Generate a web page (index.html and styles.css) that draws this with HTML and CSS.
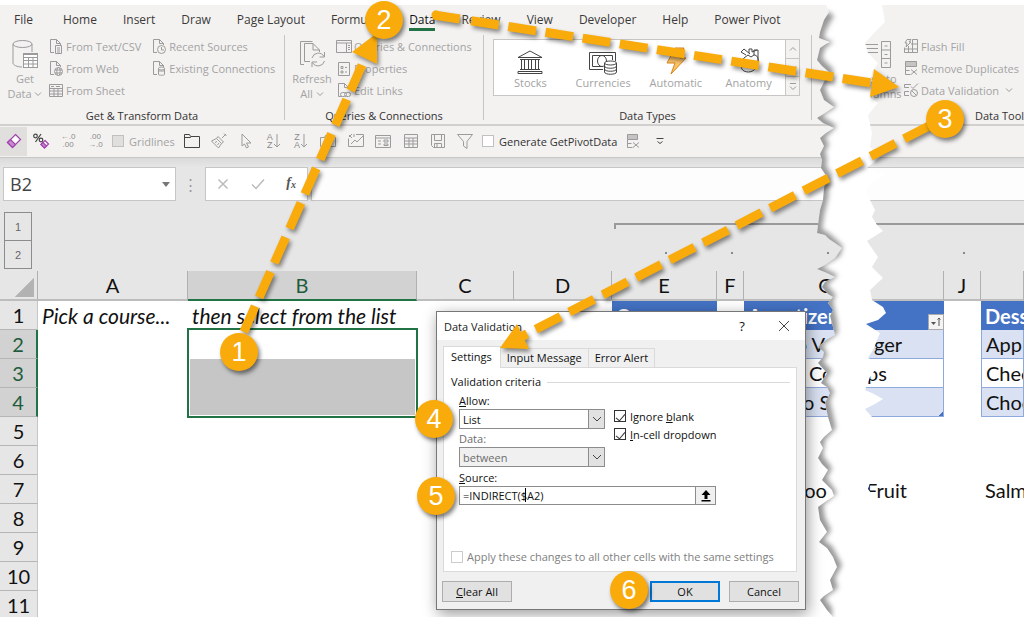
FILE: index.html
```html
<!DOCTYPE html>
<html lang="en">
<head>
<meta charset="utf-8">
<title>Dependent drop-down list – Data Validation</title>
<link rel="stylesheet" href="styles.css">
</head>
<body>
<svg class="defs" width="0" height="0" aria-hidden="true">
  <symbol id="chev" viewBox="0 0 8 8"><path d="M1 2.5 4 5.5 7 2.5"/></symbol>
  <symbol id="page" viewBox="0 0 16 16"><path d="M6 14.5H2.500V1.500H8.500L12.500 5.500V7M8.500 1.500V5.500H12.500"/></symbol>
</svg>
<div class="app">
  <header class="ribbon">
    <nav class="tabs">
      <a href="#file" class="tab file">File</a><a href="#home" class="tab">Home</a><a href="#insert" class="tab">Insert</a><a href="#draw" class="tab">Draw</a><a href="#layout" class="tab">Page Layout</a><a href="#formulas" class="tab">Formulas</a><a href="#data" class="tab active">Data</a><a href="#review" class="tab">Review</a><a href="#view" class="tab">View</a><a href="#developer" class="tab">Developer</a><a href="#help" class="tab">Help</a><a href="#pivot" class="tab">Power Pivot</a>
    </nav>
    <div class="groups">
      <section class="group get">
        <div class="tools">
          <button class="big">
            <svg class="ic" width="28" height="32" viewBox="0 0 28 32"><path d="M2 5v19c0 2 4 4 9 4M21 5v8"/><ellipse cx="11.500" cy="5" rx="9.500" ry="3.500"/><rect x="12.500" y="14.500" width="14" height="14" fill="#fff"/><path d="M12.500 15.500h14v3h-14zM17.500 18v10M22 18v10M12.500 21.500h14M12.500 25h14"/></svg>
            <span>Get</span><span>Data <svg class="ic" width="8" height="8"><use href="#chev"/></svg></span>
          </button>
          <div class="stack">
            <button class="small"><svg class="ic" width="16" height="16" viewBox="0 0 16 16"><use href="#page"/><path d="M7.500 7.500h6v8h-6zM9 10h3M9 12h3M9 14h3"/></svg>From Text/CSV</button>
            <button class="small"><svg class="ic" width="16" height="16" viewBox="0 0 16 16"><use href="#page"/><circle cx="10.500" cy="11.500" r="4"/><ellipse cx="10.500" cy="11.500" rx="1.700" ry="4"/><path d="M7 10h7M7 13h7"/></svg>From Web</button>
            <button class="small"><svg class="ic" width="16" height="16" viewBox="0 0 16 16"><path d="M1.500 2.500h13v12h-13zM1.500 6.500h13M1.500 9h13M1.500 12h13M6 6.500v8M10 6.500v8M3 4.500h3M8 4.500h4"/></svg>From Sheet</button>
          </div>
          <div class="stack second">
            <button class="small"><svg class="ic" width="16" height="16" viewBox="0 0 16 16"><use href="#page"/><circle cx="10.500" cy="11.500" r="4"/><path d="M10.500 9v3h2.500"/></svg>Recent Sources</button>
            <button class="small"><svg class="ic" width="16" height="16" viewBox="0 0 16 16"><use href="#page"/><ellipse cx="10.500" cy="8.500" rx="3" ry="1.500"/><path d="M7.500 8.500v6c0 1 6 1 6 0v-6M7.500 11h6"/></svg>Existing Connections</button>
          </div>
        </div>
        <h2>Get &amp; Transform Data</h2>
      </section>
      <section class="group conn">
        <div class="tools">
          <button class="big">
            <svg class="ic" width="28" height="32" viewBox="0 0 28 32"><path d="M6 25.500H2.500V2.500h12M12 22.500H6.500V4.500H15l6.500 6.500v2M15 4.500V11h6.500"/><path d="M14 19a6.500 6.500 0 0 1 12-1.500M26.500 13v5h-5M26.500 22a6.500 6.500 0 0 1-12 1.500M14 28v-5h5"/></svg>
            <span>Refresh</span><span>All <svg class="ic" width="8" height="8"><use href="#chev"/></svg></span>
          </button>
          <div class="stack">
            <button class="small"><svg class="ic" width="16" height="16" viewBox="0 0 16 16"><path d="M.5 1.500h15v12H.5zM.5 4h15M10.500 4v9.500M12 6.500h2M12 8.500h2M12 10.500h2"/></svg>Queries &amp; Connections</button>
            <button class="small"><svg class="ic" width="16" height="16" viewBox="0 0 16 16"><path d="M2.500 1.500h11v13h-11zM5 5.500h2v2H5zM5 10h2v2H5zM9 6.500h2M9 11h2"/></svg>Properties</button>
            <button class="small"><svg class="ic" width="16" height="16" viewBox="0 0 16 16"><use href="#page"/><rect x="4.500" y="10.500" width="6" height="4" rx="2"/><rect x="8.500" y="10.500" width="6" height="4" rx="2"/></svg>Edit Links</button>
          </div>
        </div>
        <h2>Queries &amp; Connections</h2>
      </section>
      <section class="group types">
        <div class="gallery">
          <button class="type"><svg class="dark" width="28" height="26" viewBox="0 0 28 26"><path d="M2 8.500 14 2l12 6.500zM4 10.500h20M2 22.500h24v2H2zM4 20.500h20M5.500 10.500v10M8.500 10.500v10M12.500 10.500v10M15.500 10.500v10M19.500 10.500v10M22.500 10.500v10"/></svg>Stocks</button>
          <button class="type"><svg class="dark" width="28" height="26" viewBox="0 0 28 26"><path d="M14 20.500H.5v-17h26V12M3.500 17.500v-11h20V11M3.500 17.500H14"/><ellipse cx="13" cy="12" rx="4.500" ry="5.500"/><path d="M15.500 14v9c0 3 12 3 12 0v-9" fill="#fff"/><ellipse cx="21.500" cy="14" rx="6" ry="2" fill="#fff"/><path d="M15.500 17c0 3 12 3 12 0M15.500 20c0 3 12 3 12 0"/></svg>Currencies</button>
          <button class="type"><svg class="bolt" width="28" height="28" viewBox="0 0 28 28"><path d="M13 1h9l-4 10h6L9 27l4-11H5z"/></svg>Automatic</button>
          <button class="type"><svg class="dark" width="28" height="28" viewBox="0 0 28 28"><path d="M9 11c-4 4-4 11 0 13 6 3 13-1 14-8 1-5-1-8-4-8l-3 2-3-2-4 3M11 8 6 5l3-3 6 5M14 6V2h3v3M19 8V3h4v12M17 5l5-2M10 14c5-1 8 3 8 8"/></svg>Anatomy</button>
          <div class="scroller">
            <button aria-label="Previous row"><svg class="ic up" width="8" height="8"><use href="#chev"/></svg></button>
            <button aria-label="Next row"><svg class="ic" width="8" height="8"><use href="#chev"/></svg></button>
            <button aria-label="More data types"><svg class="ic" width="8" height="9" viewBox="0 0 8 9"><path d="M1 1.500h6M1 4.500l3 3 3-3"/></svg></button>
          </div>
        </div>
        <h2>Data Types</h2>
      </section>
      <section class="group datatools">
        <div class="tools">
          <button class="big">
            <svg class="ic" width="32" height="32" viewBox="0 0 32 32"><path d="M1 5.500h14M3 9.500h12M1 13.500h14M18.500 2.500h9v26h-9zM18.500 11h9M18.500 19.500h9M21.500 7h3M21.500 15.500h3M21.500 24h3"/></svg>
            <span>Text to</span><span>Columns</span>
          </button>
          <div class="stack">
            <button class="small"><svg class="ic" width="16" height="16" viewBox="0 0 16 16"><path d="M4 1.500h4L6 4h2L3 9l1-4H2zM9.500 1.500h5v13h-13v-5M9.500 1.500v13M5.500 8v6.500M1.500 11h13M8 6h6.500"/></svg>Flash Fill</button>
            <button class="small"><svg class="ic" width="16" height="16" viewBox="0 0 16 16"><path d="M2.500 1.500h11v5h-11z" fill="#c4c4c4"/><path d="M2.500 6.500v8h5M2.500 10.500h4M8 9.500l6 5M14 9.500l-6 5"/></svg>Remove Duplicates</button>
            <button class="small"><svg class="ic" width="16" height="16" viewBox="0 0 16 16"><path d="M8 2.500H1.500v3H6M6 9.500H1.500v4H6M8 4.500l2 2 5-5"/><circle cx="11" cy="11" r="3.500"/><path d="m8.500 8.500 5 5"/></svg>Data Validation<svg class="ic after" width="8" height="8"><use href="#chev"/></svg></button>
          </div>
        </div>
        <h2>Data Tools</h2>
      </section>
    </div>
    <div class="quick">
      <div class="set first">
        <button class="on" aria-label="Clear"><svg class="pink" width="16" height="16" viewBox="0 0 16 16"><path d="M9.500 1.500 14.500 6.500 6.500 14.500 1.500 9.500z" fill="#fff"/><path d="m1.500 9.500 3-3 5 5-3 3z" fill="#c78bd0"/></svg></button>
        <button aria-label="Clear format"><svg class="pink" width="18" height="18" viewBox="0 0 18 18"><g stroke="#444"><circle cx="3.500" cy="4" r="1.800"/><circle cx="9" cy="8" r="1.800"/><path d="M9 2 3.500 10"/></g><path d="m13 8.500 3.500 3.500-4 4-3.500-3.500z" fill="#fff"/><path d="m9 12.500 2-2 3.500 3.500-2 2z" fill="#c78bd0"/></svg></button>
        <button class="dec" aria-label="Increase decimal"><span>←.0</span><span>.00</span></button>
        <button class="dec" aria-label="Decrease decimal"><span>.00</span><span>→.0</span></button>
      </div>
      <label class="tick dim"><input type="checkbox" disabled>Gridlines</label>
      <div class="set second">
        <button aria-label="Open"><svg class="dark" width="18" height="18" viewBox="0 0 18 18"><path d="M1.500 15.500v-13h5l1 2h9v11zM1.500 5.500h6l1-1"/></svg></button>
        <button aria-label="Format painter"><svg class="ic" width="18" height="18" viewBox="0 0 18 18"><path d="m16 2-4 4M14 1.500l2.500 2.500M8 4.500l5.500 5.500-2 1.500L6.500 6.500zM6.500 6.500 1.500 9l7 7 3-4.500M5 10.500l2-1M7.500 13l1.500-2"/></svg></button>
        <button aria-label="Select objects"><svg class="ic" width="18" height="18" viewBox="0 0 18 18"><path d="m5 2 9 9H9.500l2 4-2 1-2-4L5 14z"/></svg></button>
        <button class="sort" aria-label="Sort ascending"><span>A<br>Z</span><svg class="ic" width="8" height="16" viewBox="0 0 8 16"><path d="M4 1v13M1 11l3 3 3-3"/></svg></button>
        <button class="sort" aria-label="Sort descending"><span>Z<br>A</span><svg class="ic" width="8" height="16" viewBox="0 0 8 16"><path d="M4 1v13M1 11l3 3 3-3"/></svg></button>
        <button aria-label="Camera"><svg class="ic" width="18" height="18" viewBox="0 0 18 18"><path d="M1.500 5.500h4l1-2h5l1 2h4v9h-15z"/><circle cx="9" cy="9.500" r="3"/></svg></button>
        <button aria-label="Chart"><svg class="ic" width="18" height="18" viewBox="0 0 18 18"><path d="M1.500 6.500v8h15v-12H9M4 12l4-4 2 2 6-6M2 3l3 3M5 2 2 5M7 2v3"/></svg></button>
        <button aria-label="Form"><svg class="ic" width="18" height="18" viewBox="0 0 18 18"><path d="M1.500 3.500h15v12h-15zM1.500 6h15M4 9h3M4 12h3M10 8h4v2h-4zM10 12h4v1.500h-4z"/></svg></button>
        <button aria-label="Table"><svg class="ic" width="18" height="18" viewBox="0 0 18 18"><path d="M2.500 2.500h13v13h-13zM2.500 6h13M2.500 9h13M2.500 12h13M7 6v9.500M11 6v9.500"/></svg></button>
        <button aria-label="Save"><svg class="ic" width="18" height="18" viewBox="0 0 18 18"><path d="M2.500 2.500h13v13h-11l-2-2zM5.500 2.500v6h7v-6M5.500 15.500v-4h7v4M8 12v3"/></svg></button>
        <button aria-label="Filter"><svg class="ic" width="18" height="18" viewBox="0 0 18 18"><path d="M1.500 2.500h15L11 9.500v7L7.500 14V9.500z"/></svg></button>
      </div>
      <label class="tick"><input type="checkbox">Generate GetPivotData</label>
      <button class="solo" aria-label="Remove duplicates"><svg class="ic" width="16" height="16" viewBox="0 0 16 16"><path d="M2.500 1.500h10v5h-10z" fill="#c4c4c4"/><path d="M2.500 6.500v8h5M2.500 10.500h4M8 9.500l6 5M14 9.500l-6 5"/></svg></button>
      <button class="solo" aria-label="Customize toolbar"><svg class="dark" width="8" height="8" viewBox="0 0 8 8"><path d="M.5 1.500h7M1.500 4.500l2.500 2 2.500-2"/></svg></button>
    </div>
  </header>

  <div class="formula">
    <div class="namebox"><input aria-label="Name box" value="B2"><i class="tri"></i></div>
    <span class="grip">⋮</span>
    <div class="fx">
      <svg width="12" height="12" viewBox="0 0 12 12"><path d="m1.500 1.500 9 9M10.500 1.500l-9 9"/></svg>
      <svg width="14" height="12" viewBox="0 0 14 12"><path d="m1 6.500 4 4 8-9"/></svg>
      <span class="fn">f<sub>x</sub></span>
    </div>
    <input class="bar" aria-label="Formula bar">
  </div>

  <div class="outline">
    <div class="levels"><button>1</button><button>2</button></div>
    <div class="bracket"><i></i><i></i><i></i><i></i></div>
  </div>

  <table class="sheet">
    <colgroup><col class="rh"><col class="a"><col class="b"><col class="c"><col class="d"><col class="e"><col class="f"><col class="g"><col class="j"><col></colgroup>
    <thead>
      <tr><th class="corner"></th><th>A</th><th class="sel">B</th><th>C</th><th>D</th><th>E</th><th>F</th><th class="gh">G</th><th>J</th><th></th></tr>
    </thead>
    <tbody>
      <tr><th>1</th><td class="it">Pick a course...</td><td class="it">then select from the list</td><td></td><td></td><td class="hd">Course</td><td></td><td class="hd"><div class="split"><span>Appetizers</span><button class="filter" aria-label="Filter"><svg width="12" height="12" viewBox="0 0 12 12"><path d="M1 6h5L3.500 9z" fill="#555"/><path d="M9 10V2M7.500 3.500 9 2l1.500 1.500" fill="none" stroke="#555"/></svg></button></div></td><td></td><td class="hd">Dessert</td></tr>
      <tr><th class="sel">2</th><td></td><td class="pick"><span class="range"></span></td><td></td><td></td><td></td><td></td><td class="band"><div class="split"><span>Potato V</span><span>rger</span></div></td><td></td><td class="band">Apple Pie</td></tr>
      <tr><th class="sel">3</th><td></td><td class="shade"></td><td></td><td></td><td></td><td></td><td class="plain"><div class="split"><span>Crispy Co</span><span>ps</span></div></td><td></td><td class="plain">Cheesecake</td></tr>
      <tr><th class="sel">4</th><td></td><td class="shade"></td><td></td><td></td><td></td><td></td><td class="band last">Tomato S</td><td></td><td class="band">Chocolate</td></tr>
      <tr><th>5</th><td></td><td></td><td></td><td></td><td></td><td></td><td></td><td></td><td></td></tr>
      <tr><th>6</th><td></td><td></td><td></td><td></td><td></td><td></td><td></td><td></td><td></td></tr>
      <tr><th>7</th><td></td><td></td><td></td><td></td><td></td><td></td><td><div class="split"><span>Mushroo</span><span>Fruit</span></div></td><td></td><td>Salmon</td></tr>
      <tr><th>8</th><td></td><td></td><td></td><td></td><td></td><td></td><td></td><td></td><td></td></tr>
      <tr><th>9</th><td></td><td></td><td></td><td></td><td></td><td></td><td></td><td></td><td></td></tr>
      <tr><th>10</th><td></td><td></td><td></td><td></td><td></td><td></td><td></td><td></td><td></td></tr>
      <tr><th>11</th><td></td><td></td><td></td><td></td><td></td><td></td><td></td><td></td><td></td></tr>
    </tbody>
  </table>

  <svg class="overlay" width="1024" height="617" viewBox="0 0 1024 617" aria-hidden="true">
    <defs>
      <path id="tear" d="M826 0V5L829 12 824 20 820 32 819 38 830 42 826 44 820 48 817 60 822 66 829 72 825 80 820 90 824 100 834 107 825 113 817 118 823 123 834 128 826 133 820 138 824 146 820 154 822 160 821 168 827 177 824 188 823 200 820 210 819 217 817 233 825 235 829 239 835 243 842 248 835 258 825 265 817 269 827 273 835 277 825 282 822 287 828 294 833 297 828 303 833 310 830 316 832 323 835 335 826 340 818 347 824 352 823 357 818 363 827 373 821 383 827 387 830 393 825 403 828 417 832 430 824 437 820 442 823 448 818 458 822 464 828 470 822 480 832 490 834 496 825 502 818 507 820 520 827 532 819 542 827 548 833 557 837 567 830 580 833 590 824 596 820 600 827 610 833 617H884L883 600 877 585 883 557 863 532 875 523 886 513 868 489 872 477 876 460 873 447 880 437 868 427 872 417 865 409 875 404 883 399 874 394 865 390 870 377 880 363 868 358 873 350 880 333 866 324 878 320 886 313 883 307 872 300 870 290 883 278 872 267 878 257 867 241 883 231 877 225 872 217 875 210 865 190 877 180 885 175 867 168 880 157 870 147 872 133 868 115 878 103 870 97 872 72 878 63 868 53 865 43 877 30 885 22 882 5V0z"/>
      <clipPath id="strip"><use href="#tear"/></clipPath>
      <filter id="soft" x="-20%" y="-5%" width="140%" height="110%"><feGaussianBlur stdDeviation="2.500"/></filter>
    </defs>
    <use href="#tear" fill="#fff"/>
    <g clip-path="url(#strip)"><path filter="url(#soft)" transform="translate(5 -4)" fill="#999" d="M790 16H824L829 20 824 28 820 36 819 42 828 46 820 52 817 62 829 74 825 82 820 92 824 102 832 110 817 120 832 130 820 142 824 148 820 156 822 162 821 170 827 179 824 190 823 202 819 219 817 233 825 238 838 250 835 260 817 271 833 279 822 289 831 299 828 305 832 325 833 337 818 349 823 359 818 365 827 375 821 385 829 395 825 405 831 432 820 444 818 460 827 472 822 482 832 497 818 509 820 522 826 534 819 544 827 550 837 569 830 582 833 592 820 602 827 612V622H790z"/></g>
  </svg>

  <section class="dialog" role="dialog" aria-labelledby="dlg">
    <div class="title"><h1 id="dlg">Data Validation</h1><button aria-label="Help">?</button><button aria-label="Close"><svg width="12" height="12" viewBox="0 0 12 12"><path d="m1 1 10 10M11 1 1 11"/></svg></button></div>
    <div class="dtabs"><button class="active">Settings</button><button>Input Message</button><button>Error Alert</button></div>
    <div class="panel">
      <h2>Validation criteria</h2>
      <div class="fields">
        <div class="left">
          <label for="allow"><u>A</u>llow:</label>
          <div class="combo"><select id="allow"><option>List</option></select><i><svg width="10" height="8" viewBox="0 0 10 8"><path d="m1 2 4 4 4-4"/></svg></i></div>
          <label for="data" class="off">Data:</label>
          <div class="combo off"><select id="data" disabled><option>between</option></select><i><svg width="10" height="8" viewBox="0 0 10 8"><path d="m1 2 4 4 4-4"/></svg></i></div>
        </div>
        <div class="checks">
          <label><input type="checkbox" checked><span>Ignore <u>b</u>lank</span></label>
          <label><input type="checkbox" checked><span><u>I</u>n-cell dropdown</span></label>
        </div>
      </div>
      <div class="source">
        <label for="src"><u>S</u>ource:</label>
        <div class="srcrow"><input id="src" value="=INDIRECT($A2)"><span class="caret"></span><button aria-label="Collapse dialog"><svg width="10" height="12" viewBox="0 0 10 12"><path d="M5 0 9.500 5H6.500v4h-3V5H.5zM.5 10h9v1.500h-9z" fill="#000"/></svg></button></div>
      </div>
      <label class="apply"><input type="checkbox" disabled>Apply these changes to all other cells with the same settings</label>
    </div>
    <div class="actions"><button><u>C</u>lear All</button><button class="ok">OK</button><button>Cancel</button></div>
  </section>

  <svg class="overlay marks" width="1024" height="617" viewBox="0 0 1024 617">
    <g class="arrow">
      <path d="M362 65 242 336" stroke-dasharray="28 9.700"/>
      <path d="M434 15 872 83" stroke-dasharray="26 11.600 28 9.600 28 9.600 28 9.600 28 9.600 28 9.600 28 9.600 28 9.600 28 9.600 28 9.600 28 9.600 28 9.600"/>
      <path d="M929 126 521 337" stroke-dasharray="28 9.700"/>
      <circle cx="436" cy="15" r="4.500"/>
      <path class="head" d="M377 33 352 52 377 64zM899 87 874 69 870 97zM500 348 517 324 529 349z"/>
    </g>
    <g class="num"><circle cx="239" cy="352" r="19"/><circle cx="384" cy="20" r="19"/><circle cx="945" cy="119" r="19"/><circle cx="434" cy="419" r="19"/><circle cx="436" cy="496" r="19"/><circle cx="629" cy="590" r="19"/></g>
    <g class="digit"><text x="239" y="361">1</text><text x="384" y="29">2</text><text x="945" y="128">3</text><text x="434" y="428">4</text><text x="436" y="505">5</text><text x="629" y="599">6</text></g>
  </svg>
</div>
</body>
</html>
```
FILE: styles.css
```css
* { box-sizing: border-box; }
body { margin: 0; height: 100vh; overflow: hidden; background: #fff; font: 11px "Open Sans", "Noto Sans", sans-serif; color: #333; }
button { font: inherit; color: inherit; background: none; border: 0; padding: 0; margin: 0; }
h1, h2 { margin: 0; font: inherit; }
svg { flex: none; fill: none; }
.defs { position: absolute; }
.app { position: relative; padding-top: 5px; height: 100%; overflow: hidden; }
.ic { stroke: #9b9b9b; }
.up { transform: rotate(180deg); }
.dark { stroke: #444; }
.pink { stroke: #a040ac; stroke-width: 1.2; }
.bolt { fill: #fbc36c; stroke: #d98514; }

.ribbon { background: #f3f2f1; border-bottom: 1px solid #c8c6c4; overflow: hidden; }
.tabs { display: flex; height: 29px; font-size: 12px; white-space: nowrap; }
.tab { margin: 0 13px; padding-top: 6px; line-height: 17px; color: #3b3a39; text-decoration: none; height: 26px; }
.tab.file { margin: 0 17px 0 14px; }
.tab.active { border-bottom: 3px solid #217346; color: #111; }

.groups { display: flex; height: 92px; border-bottom: 2px solid #d2d0ce; overflow: hidden; }
.group { display: flex; flex-direction: column; flex: none; height: 85px; margin-top: 1px; border-right: 1px solid #c8c6c4; color: #a3a3a3; }
.group h2 { margin-top: auto; height: 14px; line-height: 19px; text-align: center; color: #333; font-weight: 500; white-space: nowrap; }
.get { width: 285px; }
.conn { width: 199px; }
.types { width: 328px; }
.datatools { flex: 1 0 212px; border: 0; }
.tools { display: flex; height: 66px; }
.big { width: 42px; margin-left: 4px; padding-top: 4px; display: flex; flex-direction: column; align-items: center; line-height: 15px; white-space: nowrap; }
.stack { display: flex; flex-direction: column; }
.small { display: flex; align-items: center; gap: 2px; height: 22px; white-space: nowrap; }
.get .stack { margin-left: 2px; }
.get .stack.second { margin-left: 10px; }
.conn .big { margin-left: 6px; }
.conn .stack { margin: 1px 0 0 3px; }
.datatools .big { margin-left: 46px; }
.datatools .stack { margin-left: 3px; }
.after { margin-left: 4px; }
.gallery { display: flex; height: 57px; margin: 4px 11px 0 9px; background: #fff; border: 1px solid #c8c6c4; }
.type { flex: 1; display: flex; flex-direction: column; align-items: center; justify-content: flex-end; padding-bottom: 4px; line-height: 16px; }
.scroller { width: 14px; display: flex; flex-direction: column; border-left: 1px solid #c8c6c4; background: #f3f2f1; }
.scroller button { flex: 1; display: flex; align-items: center; justify-content: center; border-bottom: 1px solid #c8c6c4; }
.scroller button:last-child { border: 0; }
.datatools h2 { text-align: left; margin-left: 163px; }

.quick { display: flex; align-items: center; height: 31px; padding-bottom: 1px; }
.set { display: flex; height: 29px; }
.set button { flex: 1; display: flex; align-items: center; justify-content: center; }
.set.first { width: 109px; }
.set.second { width: 301px; }
.on { background: #e1dfdd; }
.quick .dec { flex-direction: column; font: 8px/8px "Liberation Sans", sans-serif; color: #8a8a8a; }
.sort span { font: 9px/8px "Liberation Sans", sans-serif; color: #8a8a8a; }
.tick { display: flex; align-items: center; gap: 5px; margin-left: 3px; width: 66px; white-space: nowrap; }
.tick input { appearance: none; width: 12px; height: 12px; margin: 0; border: 1px solid #c0c0c0; background: #fff; }
.tick.dim { color: #a3a3a3; }
.tick.dim input { background: #e1dfdd; }
.set + .tick:not(.dim) { width: 137px; }
.solo { width: 27px; display: flex; justify-content: center; }

.formula { display: flex; align-items: center; height: 43px; padding: 9px 0 0 3px; background: linear-gradient(#dadada, #e6e6e6 9px); }
.namebox { display: flex; align-items: center; width: 173px; height: 34px; background: #fff; border: 1px solid #c6c6c6; }
.namebox input { width: 140px; flex: 1; border: 0; background: none; padding: 0 6px; font: 18px "Open Sans", sans-serif; color: #444; }
.tri { border: 4px solid transparent; border-top: 5px solid #777; border-bottom: 0; margin-right: 5px; }
.grip { width: 29px; text-align: center; font-size: 15px; color: #999; }
.fx { display: flex; align-items: center; justify-content: space-between; width: 103px; height: 34px; padding: 0 11px; background: #fff; border: 1px solid #c6c6c6; }
.fx svg { stroke: #bbb; stroke-width: 1.5; }
.fn { font: italic 700 14px/16px "Liberation Serif", serif; color: #555; }
.fn sub { font-size: 10px; vertical-align: -1px; }
.bar { flex: 1; height: 34px; margin-left: 3px; border: 1px solid #c6c6c6; border-right: 0; background: #fdfdfd; }

.outline { display: flex; height: 70px; padding: 11px 0 0 4px; background: #e6e6e6; }
.levels { display: flex; flex-direction: column; width: 28px; }
.levels button { height: 29px; margin-bottom: -1px; border: 1px solid #8c8c8c; color: #666; font: 11px "Liberation Sans", sans-serif; }
.bracket { position: relative; flex: 1; height: 6px; margin: 11px 0 0 582px; border: 2px solid #9a9a9a; border-width: 2px 0 0 2px; }
.bracket i { position: absolute; top: 27px; width: 2px; height: 2px; background: #888; }
.bracket i:nth-child(1) { left: 49px; }
.bracket i:nth-child(2) { left: 115px; }
.bracket i:nth-child(3) { left: 211px; }
.bracket i:nth-child(4) { left: 347px; }

.sheet { width: 100%; table-layout: fixed; border-collapse: separate; border-spacing: 0; font: 20px/28px Lato, sans-serif; color: #111; background: #fff; }
.rh { width: 38px; } .a { width: 150px; } .b { width: 229px; } .c { width: 97px; } .d { width: 98px; }
.e { width: 105px; } .f { width: 27px; } .g { width: 200px; } .j { width: 37px; }
.sheet th { height: 29px; padding: 0; font-weight: 400; background: #e6e6e6; border-right: 1px solid #c6c6c6; border-bottom: 1px solid #b5b5b5; }
.sheet thead th { height: 30px; border-bottom: 2px solid #bdbdbd; border-right: 1px solid #b0b0b0; }
.sheet thead th.gh { padding-right: 36px; }
.sheet td { height: 29px; padding: 0 4px; overflow: hidden; white-space: nowrap; }
.sheet thead th.sel, .sheet th.sel { background: #d2d2d2; color: #1f5c3d; }
.sheet thead th.sel { border-bottom-color: #217346; }
.sheet tbody th.sel { border-right: 2px solid #217346; }
.sheet .corner { background: linear-gradient(135deg, transparent 54%, #b2b2b2 55%) 13px 5px / 21px 21px no-repeat #e6e6e6; }
.sheet .it { font-style: italic; font-size: 21px; }
.sheet .hd { background: #4472c4; color: #fff; font-weight: 700; }
.sheet .band, .sheet .plain { border: 1px solid #8ea9db; border-top: 0; }
.sheet .band { background: #d9e1f2; }
.sheet .last { background: linear-gradient(135deg, transparent 50%, #4472c4 51%) right bottom / 5px 5px no-repeat #d9e1f2; }
.sheet .shade { background: #c6c6c6; }
.sheet .pick { position: relative; overflow: visible; }
.range { position: absolute; z-index: 1; left: -1px; top: -2px; right: -1px; height: 90px; border: 2px solid #217346; box-shadow: inset 0 0 0 1px #fff; }
.split { display: grid; grid-template-columns: 118px 1fr; align-items: center; }
.filter { justify-self: end; align-self: end; width: 16px; height: 16px; margin-right: -4px; background: #f4f4f4; border: 1px solid #aaa; display: flex; align-items: center; justify-content: center; }

.overlay { position: absolute; left: 0; top: 0; z-index: 2; pointer-events: none; }
.marks { z-index: 4; }
.arrow { filter: drop-shadow(2px 3px 2px rgba(0,0,0,.45)); stroke: #f9ab0b; stroke-width: 9; }
.arrow circle, .head { fill: #f9ab0b; stroke: none; }
.num { fill: #f9ab0b; filter: drop-shadow(2px 3px 2px rgba(0,0,0,.5)); }
.digit { fill: #fff; font: 27px "Liberation Sans", sans-serif; text-anchor: middle; }

.dialog { position: absolute; z-index: 3; left: 436px; top: 311px; width: 370px; height: 299px; display: flex; flex-direction: column; background: #f0f0f0; border: 1px solid #777; box-shadow: 2px 4px 14px rgba(0,0,0,.4); color: #111; font-size: 11px; }
.dialog svg { stroke: #444; }
.title { display: flex; align-items: center; height: 28px; flex: none; padding-left: 7px; background: #fff; }
.title h1 { flex: 1; color: #222; }
.title button { width: 42px; height: 28px; font-size: 13px; display: flex; align-items: center; justify-content: center; }
.dtabs { display: flex; align-items: flex-end; height: 27px; flex: none; margin: 0 6px; }
.dtabs button { height: 19px; padding: 0 6px 1px; border: 1px solid #dadada; border-bottom: 0; border-left: 0; }
.dtabs .active { height: 22px; margin-bottom: -1px; z-index: 1; background: #fff; border-left: 1px solid #dadada; padding: 0 8px 2px 7px; }
.panel { flex: 1; margin: 0 8px 0 6px; padding: 6px 6px 0 7px; background: #fff; border: 1px solid #dadada; display: flex; flex-direction: column; }
.panel h2 { display: flex; align-items: center; gap: 6px; line-height: 16px; }
.panel h2::after { content: ""; flex: 1; height: 1px; background: #dadada; }
.fields, .source { margin-left: 8px; }
.fields { display: flex; gap: 9px; margin-top: 1px; }
.left { width: 146px; display: flex; flex-direction: column; }
.left label, .source label { display: block; height: 18px; line-height: 19px; }
.source { margin-top: 1px; }
.off { color: #6d6d6d; }
.combo { display: flex; height: 20px; border: 1px solid #8c8c8c; background: #fff; }
.combo.off { background: #f0f0f0; }
.combo select { flex: 1; appearance: none; border: 0; padding: 0 3px; background: none; font: inherit; color: inherit; opacity: 1; }
.combo i { width: 16px; border-left: 1px solid #8c8c8c; background: #e1e1e1; display: flex; align-items: center; justify-content: center; }
.checks { padding-top: 16px; }
.checks label { display: flex; align-items: center; gap: 4px; height: 18px; }
.checks input, .apply input { appearance: none; width: 12px; height: 12px; margin: 0; border: 1px solid #333; background: #fff; }
.checks input:checked { display: grid; place-items: center; }
.checks input:checked::before { content: ""; width: 4px; height: 8px; border: solid #333; border-width: 0 1px 1px 0; transform: rotate(40deg); }
.srcrow { position: relative; display: flex; width: 257px; height: 19px; border: 1px solid #8c8c8c; }
.srcrow input { flex: 1; width: 100px; border: 0; padding: 0 3px; font: inherit; color: inherit; background: #fff; }
.srcrow button { width: 20px; border: 1px solid #8c8c8c; border-width: 0 0 0 1px; background: #f0f0f0; display: flex; align-items: center; justify-content: center; }
.srcrow button svg { stroke: none; }
.caret { position: absolute; left: 65px; top: 1px; width: 1px; height: 14px; background: #000; }
.apply { display: flex; align-items: center; gap: 4px; margin-top: auto; margin-bottom: 7px; color: #808080; white-space: nowrap; }
.apply input { border-color: #ccc; }
.actions { display: flex; flex: none; gap: 9px; height: 37px; padding: 9px 6px 0 5px; }
.actions button { width: 70px; height: 21px; border: 1px solid #adadad; background: #e1e1e1; }
.actions button:first-child { margin-right: auto; }
.actions .ok { border: 2px solid #0078d7; }
```
